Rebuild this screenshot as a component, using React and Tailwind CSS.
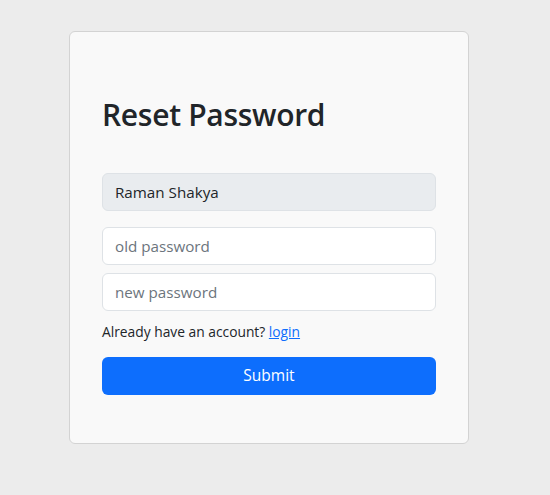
export default function App() {
  return (
    <div className="min-h-[495px] w-full bg-[#ececec] pt-[31px]" style={{ fontFamily: '"Open Sans", "Noto Sans", sans-serif' }}>
      <div className="ml-[69px] w-[400px] rounded-[6px] border border-[#d3d3d3] bg-[#f9f9f9] px-[32px] pt-[64px] pb-[48px]">
        <h1 className="text-[30px] leading-[37px] font-semibold text-[#212529] tracking-[-0.3px]">Reset Password</h1>
        <form className="mt-[40px] flex flex-col" onSubmit={(e) => e.preventDefault()}>
          <input
            type="text"
            value="Raman Shakya"
            disabled
            className="h-[38px] w-full rounded-[6px] border border-[#dee2e6] bg-[#e9ecef] px-[12px] text-[15.2px] text-[#212529] outline-none"
          />
          <input
            type="password"
            placeholder="old password"
            className="mt-[16px] h-[38px] w-full rounded-[6px] border border-[#dee2e6] bg-white px-[12px] text-[15.2px] text-[#212529] placeholder:text-[#6c757d] outline-none"
          />
          <input
            type="password"
            placeholder="new password"
            className="mt-[8px] h-[38px] w-full rounded-[6px] border border-[#dee2e6] bg-white px-[12px] text-[15.2px] text-[#212529] placeholder:text-[#6c757d] outline-none"
          />
          <p className="mt-[10px] text-[13.8px] leading-[21px] text-[#212529]">
            Already have an account? <a href="#" className="text-[#0d6efd] underline">login</a>
          </p>
          <button type="submit" className="mt-[15px] h-[38px] w-full rounded-[6px] bg-[#0d6efd] text-[15.5px] text-white">
            Submit
          </button>
        </form>
      </div>
    </div>
  );
}
